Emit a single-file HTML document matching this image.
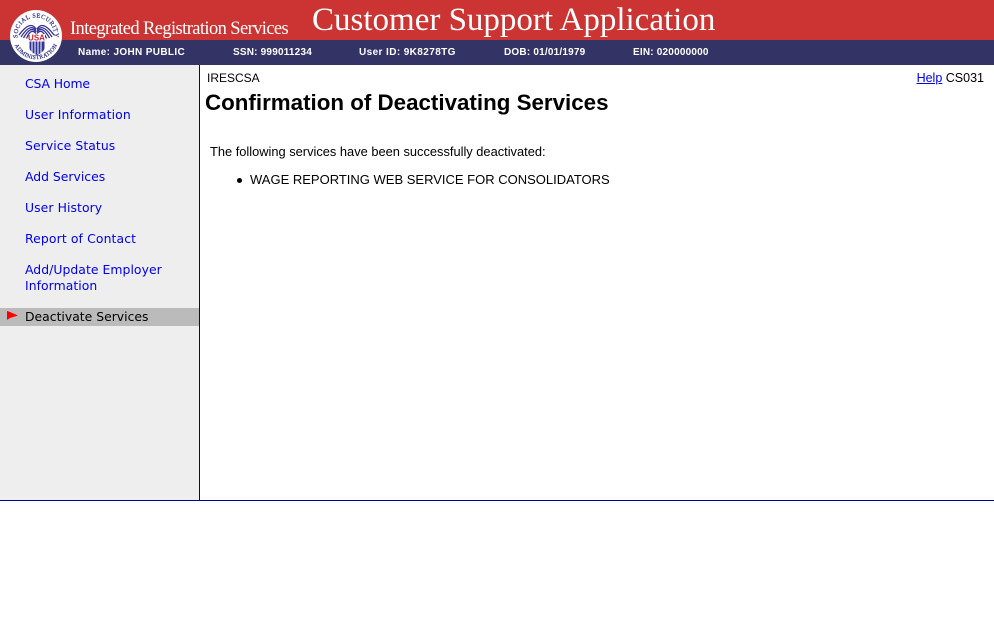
<!DOCTYPE html>
<html><head><meta charset="utf-8"><title>Customer Support Application</title>
<style>
html,body{margin:0;padding:0;background:#fff;width:994px;height:640px;overflow:hidden}
body{position:relative;font-family:"Liberation Sans",sans-serif;color:#000}
div,a,span,h1,svg{position:absolute;white-space:nowrap;margin:0}
.red{left:0;top:0;width:994px;height:40px;background:#cc3333}
.navy{left:0;top:40px;width:994px;height:25px;background:#333366}
.serif{font-family:"Liberation Serif",serif;color:#fff}
.info{top:46px;font-size:10px;font-weight:bold;color:#fff;line-height:13px;letter-spacing:.2px}
.side{left:0;top:65px;width:199px;height:435px;background:#eeeeee}
.vl{left:199px;top:65px;width:1px;height:436px;background:#000099}
.hl{left:0;top:500px;width:994px;height:1px;background:#000099}
.nav{left:25px;font-family:"DejaVu Sans",sans-serif;font-size:12.4px;line-height:16px;color:#0000ee;text-decoration:none}
.sel{left:0;top:308px;width:199px;height:18px;background:#bbbbbb}
.t{font-size:12px;line-height:14px}
</style></head><body>
<div class="red"></div><div class="navy"></div>
<div class="serif" style="left:70px;top:17px;font-size:18.500px;line-height:24px;letter-spacing:-.6px">Integrated Registration Services</div>
<div class="serif" style="left:312px;top:1px;font-size:33px;line-height:38px">Customer Support Application</div>
<div class="info" style="left:78px;letter-spacing:.35px">Name: JOHN PUBLIC</div>
<div class="info" style="left:233px">SSN: 999011234</div>
<div class="info" style="left:359px;letter-spacing:.4px">User ID: 9K8278TG</div>
<div class="info" style="left:504px">DOB: 01/01/1979</div>
<div class="info" style="left:633px">EIN: 020000000</div>

<svg style="left:9px;top:10px" width="54" height="54" viewBox="0 0 54 54">
<defs>
<path id="top" d="M9.500 32 A18.500 18.500 0 1 1 44.500 32"/>
<path id="bot" d="M3.800 28 A23.300 23.300 0 0 0 50.200 28"/>
</defs>
<circle cx="27" cy="26" r="26" fill="#fff"/>
<text font-family="Liberation Serif,serif" font-size="6.200" fill="#333388" stroke="#333388" stroke-width=".22" letter-spacing=".5"><textPath href="#top" startOffset="50%" text-anchor="middle">SOCIAL SECURITY</textPath></text>
<text font-family="Liberation Serif,serif" font-size="5.800" fill="#333388" stroke="#333388" stroke-width=".22" letter-spacing=".3"><textPath href="#bot" startOffset="50%" text-anchor="middle">ADMINISTRATION</textPath></text>
<g fill="none" stroke="#333399" stroke-width="1.300">
<path d="M27 19C24 14 19 13 10 25"/>
<path d="M27 20.500C24 16 19 16 12 27"/>
<path d="M27 22C24 18 20 18 14.500 28"/>
<path d="M27 23.500C24 20 21 20 17.500 28.500"/>
<path d="M28 19C31 14 36 13 45 25"/>
<path d="M28 20.500C31 16 36 16 43 27"/>
<path d="M28 22C31 18 35 18 40.500 28"/>
<path d="M28 23.500C31 20 34 20 37.500 28.500"/>
</g>
<rect x="20" y="24" width="16" height="7" fill="#fff"/>
<text x="27.500" y="30.500" font-family="Liberation Sans,sans-serif" font-size="8" font-weight="bold" fill="#cc2233" text-anchor="middle">USA</text>
<path d="M20.500 31.500H35.500V38C35.500 41 31 44 28 45C25 44 20.500 41 20.500 38Z" fill="#333399"/>
<path d="M23 31.500V43M26 31.500V44M29 31.500V44M32 31.500V43" stroke="#fff" stroke-width="1"/>
</svg>

<div class="side"></div><div class="sel"></div><div class="vl"></div><div class="hl"></div>
<a class="nav" href="#" style="top:76px;letter-spacing:-.1px">CSA Home</a>
<a class="nav" href="#" style="top:107px;letter-spacing:.12px">User Information</a>
<a class="nav" href="#" style="top:138px;letter-spacing:.08px">Service Status</a>
<a class="nav" href="#" style="top:169px">Add Services</a>
<a class="nav" href="#" style="top:200px;letter-spacing:.08px">User History</a>
<a class="nav" href="#" style="top:231px;letter-spacing:.12px">Report of Contact</a>
<a class="nav" href="#" style="top:262px;letter-spacing:.05px">Add/Update Employer<br>Information</a>
<svg style="left:7px;top:311px" width="11" height="9" viewBox="0 0 11 9"><path d="M0 0L3 1L11 4.500L3 7L0 9Z" fill="#ff0000"/></svg>
<a class="nav" href="#" style="top:309px;color:#000">Deactivate Services</a>

<div class="t" style="left:207px;top:71px">IRESCSA</div>
<div class="t" style="right:10px;top:71px;font-size:12.500px"><a href="#" style="position:static;color:#0000ee">Help</a> CS031</div>
<h1 style="left:205px;top:90px;font-size:22.350px;line-height:26px;font-weight:bold">Confirmation of Deactivating Services</h1>
<div class="t" style="left:210px;top:145px;font-size:12.850px">The following services have been successfully deactivated:</div>
<div style="left:237px;top:178px;width:5px;height:5px;border-radius:50%;background:#000"></div>
<div class="t" style="left:250px;top:173px;font-size:13px">WAGE REPORTING WEB SERVICE FOR CONSOLIDATORS</div>
</body></html>
